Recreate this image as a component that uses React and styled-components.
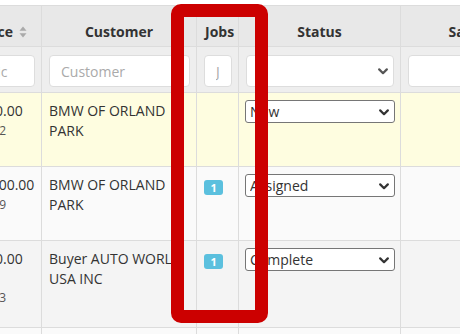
import React from "react";
import styled, { createGlobalStyle } from "styled-components";

const GlobalStyle = createGlobalStyle`
  body {
    margin: 0;
    font-family: "Open Sans", "Liberation Sans", sans-serif;
    color: #333;
    background: #fff;
  }
`;

const rows = [
  { price: "$500.00", sub: ["#4512"], customer: "BMW OF ORLAND PARK", jobs: null, status: "New", bg: "#fefde0", h: 74 },
  { price: "$1,000.00", sub: ["#3309"], customer: "BMW OF ORLAND PARK", jobs: 1, status: "Assigned", bg: "#fafafa", h: 74 },
  { price: "$700.00", sub: ["\u00a0", "#2873"], customer: "Buyer AUTO WORLD USA INC", jobs: 1, status: "Complete", bg: "#f4f4f4", h: 87 },
  { price: "", sub: [], customer: "", jobs: null, status: null, bg: "#fafafa", h: 40 },
];

const Chevron = ({ color }) => (
  <ChevronIcon width="10" height="7" viewBox="0 0 10 7">
    <path d="M1.2 1.4 L5 5.2 L8.8 1.4" fill="none" stroke={color} strokeWidth="2.2" strokeLinecap="round" strokeLinejoin="round" />
  </ChevronIcon>
);

const SortIcon = () => (
  <svg width="8" height="12" viewBox="0 0 8 12" style={{ marginLeft: 6, verticalAlign: "-1px" }}>
    <path d="M4 0.5 L7.5 4.8 H0.5 Z" fill="#aaa" />
    <path d="M4 11.5 L7.5 7.2 H0.5 Z" fill="#aaa" />
  </svg>
);

const App = () => {
  return (
    <>
      <GlobalStyle />
      <Viewport>
        <Table>
          <colgroup>
            <col style={{ width: 78 }} />
            <col style={{ width: 155 }} />
            <col style={{ width: 42 }} />
            <col style={{ width: 162 }} />
            <col style={{ width: 180 }} />
          </colgroup>
          <thead>
            <tr>
              <HeadCell>Price<SortIcon /></HeadCell>
              <HeadCell>Customer</HeadCell>
              <HeadCell>Jobs</HeadCell>
              <HeadCell>Status</HeadCell>
              <HeadCell>Salesperson</HeadCell>
            </tr>
            <tr>
              <FilterCell><FilterInput placeholder="Pric" /></FilterCell>
              <FilterCell><FilterInput placeholder="Customer" /></FilterCell>
              <FilterCell><FilterInput placeholder="J" /></FilterCell>
              <FilterCell>
                <SelectWrap>
                  <FilterSelect defaultValue="">
                    <option value=""></option>
                  </FilterSelect>
                  <Chevron color="#555" />
                </SelectWrap>
              </FilterCell>
              <FilterCell><FilterInput /></FilterCell>
            </tr>
          </thead>
          <tbody>
            {rows.map((r, i) => (
              <Row key={i} $bg={r.bg} $h={r.h}>
                <Cell>
                  {r.price}
                  {r.sub.map((s, j) => (
                    <SubText key={j}>{s}</SubText>
                  ))}
                </Cell>
                <Cell>{r.customer}</Cell>
                <Cell>{r.jobs && <Badge>{r.jobs}</Badge>}</Cell>
                <StatusCell>
                  {r.status && (
                    <SelectWrap>
                      <RowSelect defaultValue={r.status}>
                        <option>{r.status}</option>
                      </RowSelect>
                      <Chevron color="#333" />
                    </SelectWrap>
                  )}
                </StatusCell>
                <Cell />
              </Row>
            ))}
          </tbody>
        </Table>
        <Highlight />
      </Viewport>
    </>
  );
};

const Viewport = styled.div`
  position: relative;
  width: 460px;
  height: 334px;
  overflow: hidden;
  padding-top: 5px;
  box-sizing: border-box;
`;

const Table = styled.table`
  margin-left: -37px;
  width: 617px;
  table-layout: fixed;
  border-collapse: collapse;
  font-size: 14px;
  line-height: 20px;
`;

const HeadCell = styled.th`
  background: #e8e8e8;
  border: 1px solid #dcdcdc;
  padding: 16px 8px 4px;
  font-weight: 700;
  text-align: center;
  white-space: nowrap;
  color: #333;
`;

const FilterCell = styled.td`
  background: #eeeeee;
  border: 1px solid #dcdcdc;
  padding: 8px 6px 5px 7px;
`;

const FilterInput = styled.input`
  display: block;
  box-sizing: border-box;
  width: 100%;
  height: 32px;
  border: 1px solid #ddd;
  border-radius: 4px;
  background: #fff;
  padding: 0 11px;
  font-family: "Open Sans", "Liberation Sans", sans-serif;
  font-size: 14px;
  color: #333;
  outline: none;
  &::placeholder {
    color: #aaa;
  }
`;

const SelectWrap = styled.div`
  position: relative;
`;

const ChevronIcon = styled.svg`
  position: absolute;
  right: 6px;
  top: 50%;
  margin-top: -3px;
  pointer-events: none;
`;

const FilterSelect = styled.select`
  display: block;
  box-sizing: border-box;
  width: 100%;
  height: 32px;
  border: 1px solid #ddd;
  border-radius: 4px;
  background: #fff;
  appearance: none;
  font-family: "Open Sans", "Liberation Sans", sans-serif;
  font-size: 14px;
`;

const Row = styled.tr`
  background: ${(p) => p.$bg};
  height: ${(p) => p.$h}px;
`;

const Cell = styled.td`
  border: 1px solid #dcdcdc;
  padding: 8px 7px 6px;
  vertical-align: top;
  color: #333;
  white-space: normal;
`;

const StatusCell = styled(Cell)`
  padding: 7px 5px 6px 6px;
`;

const SubText = styled.div`
  font-size: 12px;
  line-height: 19px;
  color: #555;
  white-space: nowrap;
`;

const Badge = styled.span`
  display: inline-block;
  margin-top: 5px;
  padding: 0 6.5px;
  height: 15px;
  line-height: 15px;
  border-radius: 3px;
  background: #5bc0de;
  color: #fff;
  font-size: 11px;
  font-weight: 700;
  vertical-align: top;
`;

const RowSelect = styled.select`
  display: block;
  box-sizing: border-box;
  width: 100%;
  height: 23px;
  border: 1px solid #767676;
  border-radius: 3px;
  background: #fff;
  appearance: none;
  padding: 0 20px 0 4px;
  font-family: "Open Sans", "Liberation Sans", sans-serif;
  font-size: 14px;
  color: #333;
`;

const Highlight = styled.div`
  position: absolute;
  left: 171px;
  top: 4px;
  width: 97px;
  height: 319px;
  box-sizing: border-box;
  border: 13px solid #cc0000;
  border-radius: 10px;
  pointer-events: none;
`;

export default App;
